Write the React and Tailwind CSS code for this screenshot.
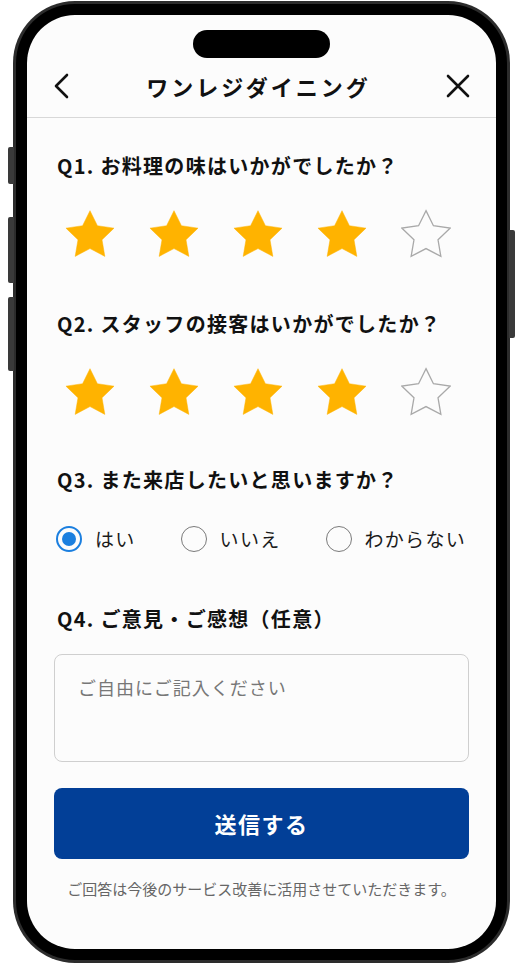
import React from 'react';

const jp = { fontFamily: '"Noto Sans CJK JP", "Noto Sans", sans-serif' };

function Star({ filled }) {
  return (
    <svg width="50" height="49" viewBox="1.6 1.6 20.8 19.8">
      <path
        d="M12 2l3.09 6.26L22 9.27l-5 4.87 1.18 6.88L12 17.77l-6.18 3.25L7 14.14 2 9.27l6.91-1.01L12 2z"
        fill={filled ? '#FFB300' : 'none'}
        stroke={filled ? '#FFB300' : '#a9a9a9'}
        strokeWidth={filled ? 0.2 : 0.55}
        strokeLinejoin="miter"
      />
    </svg>
  );
}

function StarRow({ value }) {
  return (
    <div className="flex items-center gap-[34px] pl-[11px]">
      {[1, 2, 3, 4, 5].map((n) => (
        <Star key={n} filled={n <= value} />
      ))}
    </div>
  );
}

function Radio({ label, checked }) {
  return (
    <div className="flex items-center gap-[13px]">
      {checked ? (
        <div className="w-[26px] h-[26px] rounded-full border-[2.5px] border-[#1b7fdf] flex items-center justify-center">
          <div className="w-[14px] h-[14px] rounded-full bg-[#1b7fdf]" />
        </div>
      ) : (
        <div className="w-[26px] h-[26px] rounded-full border-[1.5px] border-[#7a7a7a]" />
      )}
      <span className="text-[19px] tracking-[1.3px] text-[#1a1a1a] leading-[28px]">{label}</span>
    </div>
  );
}

function Question({ children, className = '' }) {
  return (
    <h2 className={`text-[20px] font-bold tracking-[1.3px] text-[#111] leading-[28px] ${className}`}>
      {children}
    </h2>
  );
}

export default function App() {
  return (
    <div className="w-[525px] h-[967px] bg-white pl-[13px] pt-[1px]" style={jp}>
      <div className="relative w-[497px] h-[962px]">
        {/* side buttons */}
        <div className="absolute left-[-5px] top-[146px] w-[6px] h-[37px] rounded-l-[2px] bg-[#3a3a3a]" />
        <div className="absolute left-[-5px] top-[216px] w-[6px] h-[66px] rounded-l-[2px] bg-[#3a3a3a]" />
        <div className="absolute left-[-5px] top-[296px] w-[6px] h-[74px] rounded-l-[2px] bg-[#3a3a3a]" />
        <div className="absolute right-[-5px] top-[229px] w-[6px] h-[108px] rounded-r-[2px] bg-[#3a3a3a]" />

        <div className="w-full h-full rounded-[62px] bg-[#2c2c2c] p-[3px]">
          <div className="w-full h-full rounded-[59px] bg-black p-[11px]">
            <div className="w-full h-full rounded-[48px] bg-[#fcfcfc] overflow-hidden flex flex-col">
              {/* dynamic island */}
              <div className="pt-[15px] flex justify-center">
                <div className="w-[137px] h-[28px] rounded-full bg-black" />
              </div>

              {/* header */}
              <div className="h-[60px] flex items-center justify-between px-[26px] pb-[4px] border-b border-[#d8d8d8]">
                <svg width="18" height="26" viewBox="0 0 18 26">
                  <path d="M14 2L3 13l11 11" fill="none" stroke="#111" strokeWidth="2.6" strokeLinecap="round" strokeLinejoin="round" />
                </svg>
                <h1 className="text-[22px] font-bold tracking-[3px] text-[#111] leading-[30px]">ワンレジダイニング</h1>
                <svg width="24" height="24" viewBox="0 0 24 24">
                  <path d="M2 2l20 20M22 2L2 22" fill="none" stroke="#111" strokeWidth="2.6" strokeLinecap="round" />
                </svg>
              </div>

              {/* form */}
              <div className="px-[27px] flex flex-col">
                <Question className="mt-[34px] ml-[3px]">Q1. お料理の味はいかがでしたか？</Question>
                <div className="mt-[29px]">
                  <StarRow value={4} />
                </div>

                <Question className="mt-[52px] ml-[3px]">Q2. スタッフの接客はいかがでしたか？</Question>
                <div className="mt-[29px]">
                  <StarRow value={4} />
                </div>

                <Question className="mt-[50px] ml-[3px]">Q3. また来店したいと思いますか？</Question>
                <div className="mt-[31px] ml-[2px] flex items-center gap-[45px]">
                  <Radio label="はい" checked />
                  <Radio label="いいえ" />
                  <Radio label="わからない" />
                </div>

                <Question className="mt-[52px] ml-[3px]">Q4. ご意見・ご感想（任意）</Question>
                <div className="mt-[21px] h-[108px] rounded-[8px] border border-[#cfcfcf] bg-[#fcfcfc] px-[23px] pt-[19px]">
                  <span className="text-[18px] tracking-[1px] text-[#777] leading-[26px]">ご自由にご記入ください</span>
                </div>

                <button className="mt-[26px] h-[71px] w-full rounded-[8px] bg-[#023f97] text-white text-[22px] font-bold tracking-[1.5px]">
                  送信する
                </button>

                <p className="mt-[20px] text-center text-[15px] text-[#666] leading-[20px]">
                  ご回答は今後のサービス改善に活用させていただきます。
                </p>
              </div>
            </div>
          </div>
        </div>
      </div>
    </div>
  );
}
